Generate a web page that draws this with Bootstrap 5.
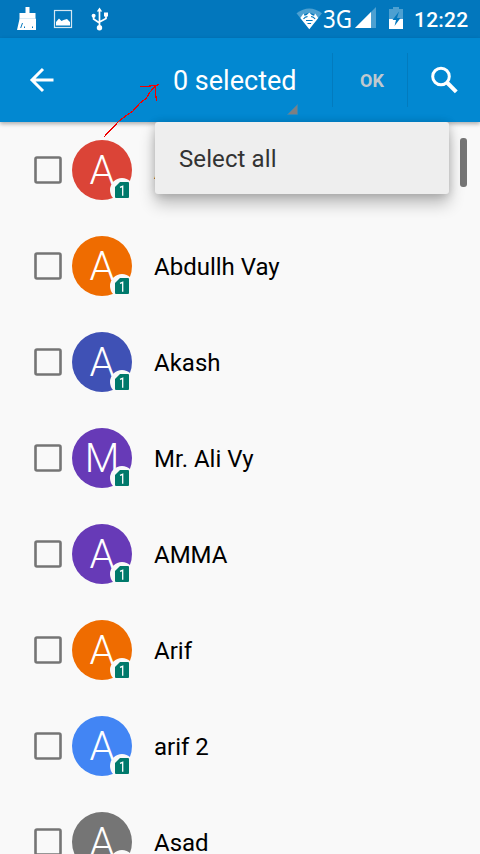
<!DOCTYPE html>
<html lang="en">
<head>
<meta charset="utf-8">
<meta name="viewport" content="width=device-width, initial-scale=1">
<title>Select contacts</title>
<link rel="stylesheet" href="https://cdn.jsdelivr.net/npm/bootstrap@5.3.0/dist/css/bootstrap.min.css">
<style>
body{font-family:Roboto,sans-serif;background:#f9f9f9;color:#000;height:854px;overflow:hidden}
svg{display:block;flex:none}
.screen{width:480px;height:854px}
.statusbar{height:38px;background:#0277bd;color:#fff}
.clock{font-size:21px;font-weight:500;line-height:38px;letter-spacing:.2px;width:55px;margin-left:-1px;padding-top:1px}
.appbar{height:84px;background:#0288d1;color:#fff;box-shadow:0 2px 4px rgba(0,0,0,.3);z-index:2}
.back{width:84px}
.spinner{width:248px;height:84px}
.spinner-label{font-size:27px;line-height:86px;padding-left:89px;white-space:nowrap}
.corner{right:34px;bottom:7px}
.divided{width:76px;height:54px;border-left:1px solid #027bbe;border-right:1px solid #027bbe;color:#bfc9cf;font-size:18px;font-weight:700}
.find{width:72px}
.contact{height:96px;padding-left:34px}
.contact-name{font-size:24px;line-height:28px;margin-left:22px;padding-top:2px}
.box{margin-right:10px}
.popup{left:155px;top:122px;width:294px;height:72px;background:#eee;color:#333;border-radius:3px;box-shadow:0 10px 16px rgba(0,0,0,.24),0 1px 10px rgba(0,0,0,.18);z-index:3;font-size:24px;letter-spacing:.1px;padding:1px 0 0 24px}
.thumb{left:460px;top:138px;width:7px;height:49px;border-radius:3px;background:#757575;z-index:1}
.pointer{left:0;top:0;z-index:4;pointer-events:none}
</style>
</head>
<body>
<svg width="0" height="0" class="position-absolute">
<defs>
<symbol id="check" viewBox="0 0 28 28"><rect x="1.5" y="1.5" width="25" height="25" rx="1.5" fill="none" stroke="#757575" stroke-width="2.6"/></symbol>
<symbol id="sim" viewBox="0 0 24 24"><circle cx="12" cy="12" r="12" fill="#f9f9f9"/><path d="M5 9l5-5h8q1 0 1 1v14q0 1-1 1H6q-1 0-1-1z" fill="#00796b"/><path d="M10 9.300l2.700-1v9.400" fill="none" stroke="#fff" stroke-width="1.300"/></symbol>
</defs>
</svg>
<div class="screen position-relative overflow-hidden">
<header class="statusbar d-flex align-items-center">
<svg width="290" height="38" viewBox="0 0 290 38">
<path fill="#fff" d="M25.500 7h4v6h6v5.500H19.500V13h6zM19.500 19H36v11H17z"/>
<path d="M19.500 18.800H35.500V28.500H19.800" fill="none" stroke="#fff"/>
<path d="M22.500 23l-1.800 5M24.500 26.500v1.500M32.500 26.500v1.500" stroke="#0277bd" stroke-width="1"/>
<rect x="54.500" y="10.500" width="17" height="17" fill="none" stroke="#d5e7f2" stroke-width="1.200"/>
<path fill="#fff" d="M56 25.500V22l3-3.500 2.500 2.500 2-1 3.500-1 3 3v3.500z"/>
<g stroke="#fff" fill="none" stroke-width="1.700"><path d="M99.500 10v16M93.600 16v3l5.900 4M106 15v3.500L99.500 22"/></g>
<path fill="#fff" d="M99.500 7.500l2.700 4h-5.400zM104 12.500h4v4h-4z"/><circle cx="93.600" cy="15.800" r="2" fill="#fff"/><circle cx="99.500" cy="27.700" r="2.700" fill="#fff"/>
</svg>
<svg width="125" height="38" viewBox="290 0 125 38">
<path fill="#4da0d1" d="M296.500 13.300Q309.300 3.500 322 13.300L309.300 29.300z"/>
<path fill="#0277bd" d="M300.500 18.300L304 14.500l5.300-2 5.300 2 3.500 3.800-8.800 11z"/>
<path fill="#fff" d="M300.300 18l3.200-4.500 1 2.200q2 .3 4.800-3.200 2.800 3.500 4.800 3.200l1-2.200 3.200 4.500-9 11.300z"/>
<path d="M303.500 19q1.800-2.500 4-2.300M315.100 19q-1.800-2.500-4-2.300M306 20.500h6.600M307.500 23.500h3.600" fill="none" stroke="#0277bd" stroke-width="1.200"/>
<text x="323" y="28" fill="#fff" font-family="Noto Sans,sans-serif" font-size="26" textLength="29" lengthAdjust="spacingAndGlyphs">3G</text>
<path fill="#4da0d1" d="M376 7v21h-21z"/><path fill="#fff" d="M371 12v16h-16z"/>
<path fill="#4da0d1" d="M393 7h6v2h4v12h-14V9h4z"/><path fill="#fff" d="M389 19h14v10h-14z"/>
<path fill="#0277bd" d="M399 11.500l-6.500 8.500h3.500l-1.500 6 6-8h-3.500z"/>
</svg>
<span class="clock">12:22</span>
</header>
<nav class="appbar d-flex align-items-center position-relative">
<div class="back ps-4"><svg width="36" height="36" viewBox="24 62 36 36"><path d="M53.500 80H31.500M43 69L32 80l11 11" fill="none" stroke="#fff" stroke-width="3"/></svg></div>
<div class="spinner position-relative"><div class="spinner-label">0 selected</div>
<svg class="corner position-absolute" width="11" height="11" viewBox="0 0 11 11"><path d="M10.500 .5v10H.5z" fill="#7d7f82" stroke="#3989b8" stroke-width=".8"/></svg></div>
<div class="divided d-flex align-items-center justify-content-center"><span class="ps-1">OK</span></div>
<div class="find d-flex justify-content-center"><svg width="30" height="30" viewBox="429 65 30 30"><circle cx="441" cy="76.500" r="8.300" fill="none" stroke="#fff" stroke-width="3"/><path d="M447 82.500l9.300 9.300" stroke="#fff" stroke-width="4"/></svg></div>
</nav>
<main id="contacts"></main>
<div class="popup position-absolute d-flex align-items-center">Select all</div>
<div class="thumb position-absolute"></div>
<svg class="pointer position-absolute" width="180" height="145" viewBox="0 0 180 145" shape-rendering="crispEdges"><path d="M103.500 137.500L118.500 121.500l7-5.500 7.500-5 6.500-7.500 7-5.500 3.500-6 5.500-6 3.500-2M140 86.500h6l9-1M155.500 86v7l1 8" fill="none" stroke="#f00000" stroke-width="1.200"/></svg>
</div>
<script>
const contacts=[['A','#db4437','A.'],['A','#ef6c00','Abdullh Vay'],['A','#3f51b5','Akash'],['M','#673ab7','Mr. Ali Vy'],['A','#673ab7','AMMA'],['A','#ef6c00','Arif'],['A','#4285f4','arif 2'],['A','#757575','Asad']];
document.getElementById('contacts').innerHTML=contacts.map(([letter,color,name])=>`<div class="contact d-flex align-items-center"><svg class="box" width="28" height="28"><use href="#check"/></svg><svg width="60" height="60" viewBox="0 0 60 60"><circle cx="30" cy="30" r="30" fill="${color}"/><text x="30" y="44" text-anchor="middle" font-family="Roboto,sans-serif" font-weight="300" font-size="40" fill="#fff">${letter}</text><use href="#sim" x="38" y="38" width="24" height="24"/></svg><span class="contact-name">${name}</span></div>`).join('');
</script>
<script src="https://cdn.jsdelivr.net/npm/bootstrap@5.3.0/dist/js/bootstrap.bundle.min.js"></script>
</body>
</html>
